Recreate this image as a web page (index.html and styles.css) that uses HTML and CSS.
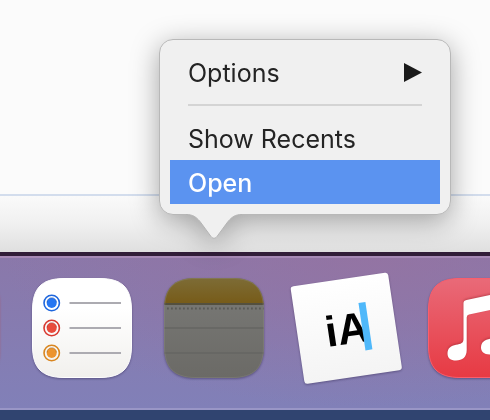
FILE: index.html
```html
<!DOCTYPE html>
<html lang="en">

<head>
    <meta charset="UTF-8">
    <meta name="viewport" content="width=device-width, initial-scale=1.0">
    <title>Dock</title>
    <link rel="stylesheet" href="styles.css">
</head>

<body>
    <main class="window">
        <div class="window-content"></div>
        <div class="window-footer"></div>
    </main>

    <nav class="dock" aria-label="Dock">
        <ul class="dock-list">
            <li class="dock-item">
                <button class="dock-app dock-app-edge" type="button" aria-label="Previous app"></button>
            </li>

            <li class="dock-item">
                <button class="dock-app" type="button" aria-label="Reminders">
                    <svg class="icon" viewBox="0 0 100 100">
                        <defs>
                            <linearGradient id="paper" x1="0" y1="0" x2="0" y2="1">
                                <stop offset="0.3" stop-color="#ffffff" />
                                <stop offset="1" stop-color="#f1f0ed" />
                            </linearGradient>
                        </defs>
                        <path d="M32 0.5H68C90 0.5 99.5 10 99.5 32V68C99.5 90 90 99.5 68 99.5H32C10 99.5 0.5 90 0.5 68V32C0.5 10 10 0.5 32 0.5Z" fill="url(#paper)" stroke="#ffffff" />
                        <g fill="none" stroke-width="1.6">
                            <circle cx="19.7" cy="25" r="7.7" stroke="#1e66dd" />
                            <circle cx="19.7" cy="50" r="7.7" stroke="#d8382f" />
                            <circle cx="19.7" cy="75" r="7.7" stroke="#d98620" />
                        </g>
                        <circle cx="19.7" cy="25" r="5" fill="#2676f2" />
                        <circle cx="19.7" cy="50" r="5" fill="#e94b3c" />
                        <circle cx="19.7" cy="75" r="5" fill="#ec9430" />
                        <g fill="none" stroke-width="1" opacity="0.6">
                            <path d="M15 24.5a4.7 4.7 0 0 1 9.4 0" stroke="#174fae" />
                            <path d="M15 49.5a4.7 4.7 0 0 1 9.4 0" stroke="#a92b25" />
                            <path d="M15 74.5a4.7 4.7 0 0 1 9.4 0" stroke="#a66315" />
                        </g>
                        <path d="M37.5 25H89M37.5 50H89M37.5 75H89" stroke="#acabb1" stroke-width="2" />
                    </svg>
                </button>
            </li>

            <li class="dock-item">
                <div class="menu" role="menu" aria-label="Notes">
                    <button class="menu-item" type="button" role="menuitem">
                        Options
                        <svg class="menu-arrow" viewBox="0 0 18 20" aria-hidden="true">
                            <path d="M0 0L18 9.5L0 19Z" fill="#1a1a1a" />
                        </svg>
                    </button>
                    <hr class="menu-line">
                    <button class="menu-item" type="button" role="menuitem">Show Recents</button>
                    <button class="menu-item selected" type="button" role="menuitem">Open</button>
                    <svg class="menu-tail" viewBox="0 0 56 26" aria-hidden="true">
                        <path d="M0 0V0.5C7 0.5 10 3 14 7.5L25 22.5C27 24.8 29 24.8 31 22.5L42 7.5C46 3 49 0.5 56 0.5V0Z" fill="#f0f0f0" />
                        <path d="M0 0.5C7 0.5 10 3 14 7.5L25 22.5C27 24.8 29 24.8 31 22.5L42 7.5C46 3 49 0.5 56 0.5" fill="none" stroke="#b4b4b4" />
                    </svg>
                </div>
                <button class="dock-app" type="button" aria-label="Notes">
                    <svg class="icon" viewBox="0 0 100 100">
                        <defs>
                            <linearGradient id="gold" x1="0" y1="0" x2="0" y2="1">
                                <stop offset="0" stop-color="#7d6c36" />
                                <stop offset="1" stop-color="#775b18" />
                            </linearGradient>
                            <linearGradient id="page" x1="0" y1="0" x2="0" y2="1">
                                <stop offset="0.2" stop-color="#777774" />
                                <stop offset="1" stop-color="#6b6a66" />
                            </linearGradient>
                            <clipPath id="tile">
                                <path d="M32 0H68C90 0 100 10 100 32V68C100 90 90 100 68 100H32C10 100 0 90 0 68V32C0 10 10 0 32 0Z" />
                            </clipPath>
                        </defs>
                        <g clip-path="url(#tile)">
                            <rect width="100" height="100" fill="url(#page)" />
                            <rect width="100" height="26" fill="url(#gold)" />
                            <path d="M0 26H100" stroke="#54503f" stroke-width="2" />
                            <path d="M3 30.5H100" stroke="#5a5a57" stroke-width="1.8" stroke-dasharray="1.8 2.2" />
                            <path d="M0 50H100M0 75H100" stroke="#666663" stroke-width="1.6" />
                        </g>
                        <path d="M32 0.5H68C90 0.5 99.5 10 99.5 32V68C99.5 90 90 99.5 68 99.5H32C10 99.5 0.5 90 0.5 68V32C0.5 10 10 0.5 32 0.5Z" fill="none" stroke="#8a8a80" opacity="0.4" />
                    </svg>
                </button>
            </li>

            <li class="dock-item">
                <button class="dock-app" type="button" aria-label="iA Writer">
                    <svg class="icon" viewBox="0 0 100 100">
                        <defs>
                            <linearGradient id="sheet" x1="0" y1="0" x2="0" y2="1">
                                <stop offset="0" stop-color="#ffffff" />
                                <stop offset="1" stop-color="#f4f4f4" />
                            </linearGradient>
                        </defs>
                        <g transform="rotate(-8.4 50 50)">
                            <rect x="1" y="1" width="98.5" height="98.5" rx="3" fill="url(#sheet)" />
                            <text class="ia-text" x="29" y="66">iA</text>
                            <rect x="66" y="27" width="7" height="48" fill="#4fb8fa" />
                        </g>
                    </svg>
                </button>
            </li>

            <li class="dock-item">
                <button class="dock-app" type="button" aria-label="Music">
                    <svg class="icon" viewBox="0 0 100 100">
                        <defs>
                            <linearGradient id="red" x1="0" y1="0" x2="0" y2="1">
                                <stop offset="0" stop-color="#e96a78" />
                                <stop offset="1" stop-color="#e73a43" />
                            </linearGradient>
                        </defs>
                        <path d="M32 0.5H68C90 0.5 99.5 10 99.5 32V68C99.5 90 90 99.5 68 99.5H32C10 99.5 0.5 90 0.5 68V32C0.5 10 10 0.5 32 0.5Z" fill="url(#red)" stroke="#fb5e6c" />
                        <g class="note">
                            <path d="M35.5 25Q35.5 22.5 38.5 22L69 15.5Q72.5 15 72.5 18V66C72.5 73 68 76.5 61.5 76.5C56 76.5 53 73.5 53 69.5C53 64 57 61.5 62 60.7C67 60 69.3 59.5 69.3 55V33Q69.3 30.5 67 31L41 36.5Q38.7 37 38.7 39.5V72C38.7 79 34.5 82.5 28 82.5C22.5 82.5 19.5 80 19.5 75.5C19.5 70 23 67.5 28 66.7C33 66 35.5 65 35.5 61Z" fill="#ffffff" />
                        </g>
                    </svg>
                </button>
            </li>
        </ul>
    </nav>
</body>

</html>
```
FILE: styles.css
```css
* {
    box-sizing: border-box;
}

body {
    margin: 0;
    height: 100vh;
    display: flex;
    flex-direction: column;
    overflow: hidden;
    font-family: Inter, "Liberation Sans", sans-serif;
    background: linear-gradient(#311d38 62%, #304470 96%);
}

.window {
    flex: 1;
    display: flex;
    flex-direction: column;
}

.window-content {
    flex: 1;
    background-color: #fbfbfb;
}

.window-footer {
    height: 58px;
    border-top: 2px solid #d3dded;
    background: linear-gradient(#fafafa, #f0f0f0 50%, #dfdfdf);
}

/* dock */
.dock {
    margin: 4px 0 10px;
    padding: 20px 0 30px;
    border-top: 2px solid #a689b5;
    border-bottom: 2px solid #9996c6;
    background: radial-gradient(ellipse at 75% 0, rgba(151, 114, 160, 0.7), rgba(151, 114, 160, 0) 70%), linear-gradient(#8a78aa, #8180b8);
}

.dock-list {
    display: flex;
    gap: 32px;
    margin: 0 0 0 -100px;
    padding: 0;
    list-style: none;
}

.dock-item {
    position: relative;
    flex: 0 0 100px;
}

.dock-app {
    display: block;
    width: 100px;
    height: 100px;
    padding: 0;
    border: none;
    background: none;
}

.dock-app-edge {
    border-radius: 24px;
    background-color: #b0607c;
    box-shadow: 0 0 2px #a0607c;
}

.icon {
    display: block;
    width: 100%;
    overflow: visible;
    filter: drop-shadow(0 1px 1px rgba(30, 20, 60, 0.4));
}

.ia-text {
    font-family: "Liberation Sans", Arial, sans-serif;
    font-size: 43px;
    font-weight: bold;
}

.note {
    filter: drop-shadow(0 -1px 1px rgba(120, 20, 30, 0.4));
}

/* context menu */
.menu {
    position: absolute;
    left: -5px;
    bottom: calc(100% + 63px);
    width: 292px;
    padding: 10px;
    border: 1px solid #b8b8b8;
    border-radius: 14px;
    background-color: #f0f0f0;
    filter: drop-shadow(0 6px 14px rgba(0, 0, 0, 0.35));
}

.menu-item {
    display: flex;
    align-items: center;
    justify-content: space-between;
    width: 100%;
    height: 44px;
    padding: 2px 18px 0;
    border: none;
    background: none;
    color: #242424;
    font-family: inherit;
    font-size: 25px;
    text-align: left;
}

.menu-item.selected {
    background-color: #5b93f0;
    color: #ffffff;
    font-weight: 500;
}

.menu-arrow {
    width: 18px;
    height: 20px;
}

.menu-line {
    height: 2px;
    margin: 10px 18px;
    border: none;
    background-color: #d4d4d4;
}

.menu-tail {
    position: absolute;
    top: 100%;
    left: 26px;
    width: 56px;
    height: 26px;
}
```
